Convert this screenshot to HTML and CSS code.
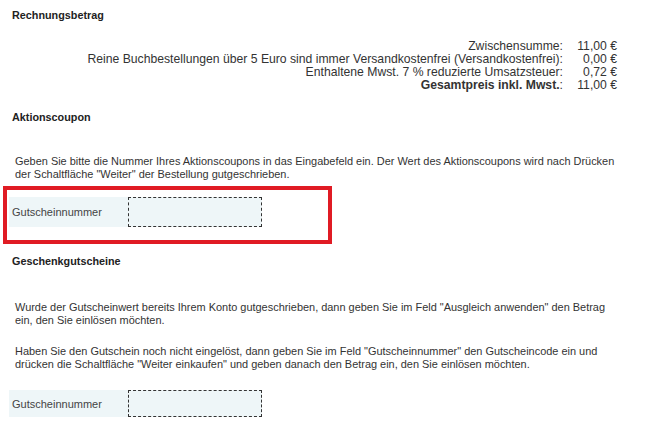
FILE: index.html
```html
<!DOCTYPE html>
<html lang="de">
<head>
<meta charset="utf-8">
<link rel="stylesheet" href="styles.css">
</head>
<body>
<div class="page">
  <h2 class="title t1">Rechnungsbetrag</h2>
  <div class="totals">
    <div class="trow"><span class="tl">Zwischensumme:</span><span class="tv">11,00 €</span></div>
    <div class="trow"><span class="tl">Reine Buchbestellungen über 5 Euro sind immer Versandkostenfrei (Versandkostenfrei):</span><span class="tv">0,00 €</span></div>
    <div class="trow"><span class="tl">Enthaltene Mwst. 7 % reduzierte Umsatzsteuer:</span><span class="tv">0,72 €</span></div>
    <div class="trow"><span class="tl"><b>Gesamtpreis inkl. Mwst.</b>:</span><span class="tv">11,00 €</span></div>
  </div>

  <h2 class="title t2">Aktionscoupon</h2>
  <p class="text p1">Geben Sie bitte die Nummer Ihres Aktionscoupons in das Eingabefeld ein. Der Wert des Aktionscoupons wird nach Drücken der Schaltfläche "Weiter" der Bestellung gutgeschrieben.</p>
  <div class="highlight">
    <div class="field f1">
      <label class="flabel">Gutscheinnummer</label>
      <span class="finput"></span>
    </div>
    <div class="redbox"></div>
  </div>

  <h2 class="title t3">Geschenkgutscheine</h2>
  <p class="text p2">Wurde der Gutscheinwert bereits Ihrem Konto gutgeschrieben, dann geben Sie im Feld "Ausgleich anwenden" den Betrag ein, den Sie einlösen möchten.</p>
  <p class="text p3">Haben Sie den Gutschein noch nicht eingelöst, dann geben Sie im Feld "Gutscheinnummer" den Gutscheincode ein und drücken die Schaltfläche "Weiter einkaufen" und geben danach den Betrag ein, den Sie einlösen möchten.</p>
  <div class="field f2">
    <label class="flabel">Gutscheinnummer</label>
    <span class="finput"></span>
  </div>
</div>
</body>
</html>
```

FILE: styles.css
```css
html, body {
  margin: 0;
  padding: 0;
  background: #ffffff;
}
body {
  font-family: "Liberation Sans", Arial, sans-serif;
  color: #333333;
  font-size: 12px;
}
.page {
  padding: 8px 0 0 0;
  width: 645px;
}
.title {
  font-size: 10.8px;
  font-weight: bold;
  margin: 0 0 0 12px;
  color: #222222;
  line-height: 14px;
}
.totals {
  margin: 18px 0 0 0;
  padding-right: 28px;
}
.trow {
  display: flex;
  justify-content: flex-end;
  line-height: 13px;
  font-size: 12.2px;
}
.tl {
  text-align: right;
}
.tl b { font-weight: bold; }
.tv {
  width: 54px;
  text-align: right;
}
.t2 { margin-top: 18px; }
.text {
  margin: 0;
  padding-left: 15px;
  padding-right: 20px;
  line-height: 13px;
  font-size: 10.95px;
}
.p1 { margin-top: 31px; }
.highlight {
  position: relative;
  margin-top: 5px;
  padding: 11px 0 12px 0;
}
.redbox {
  position: absolute;
  left: 3px;
  top: 0;
  width: 321px;
  height: 50px;
  border: 4px solid #e01b24;
}
.field {
  display: flex;
  margin-left: 9px;
  height: 28px;
  align-items: stretch;
}
.f1 { height: 30px; }
.f2 { height: 27px; margin-top: 19px; }
.flabel {
  width: 119px;
  background: #eef6f8;
  color: #444444;
  font-size: 11px;
  display: flex;
  align-items: center;
  padding-left: 3px;
  box-sizing: border-box;
}
.finput {
  width: 134px;
  background: #eef6f8;
  border: 1px dashed #333333;
  box-sizing: border-box;
}
.t3 { margin-top: 15px; }
.p2 { margin-top: 33px; }
.p3 { margin-top: 18px; }
```
